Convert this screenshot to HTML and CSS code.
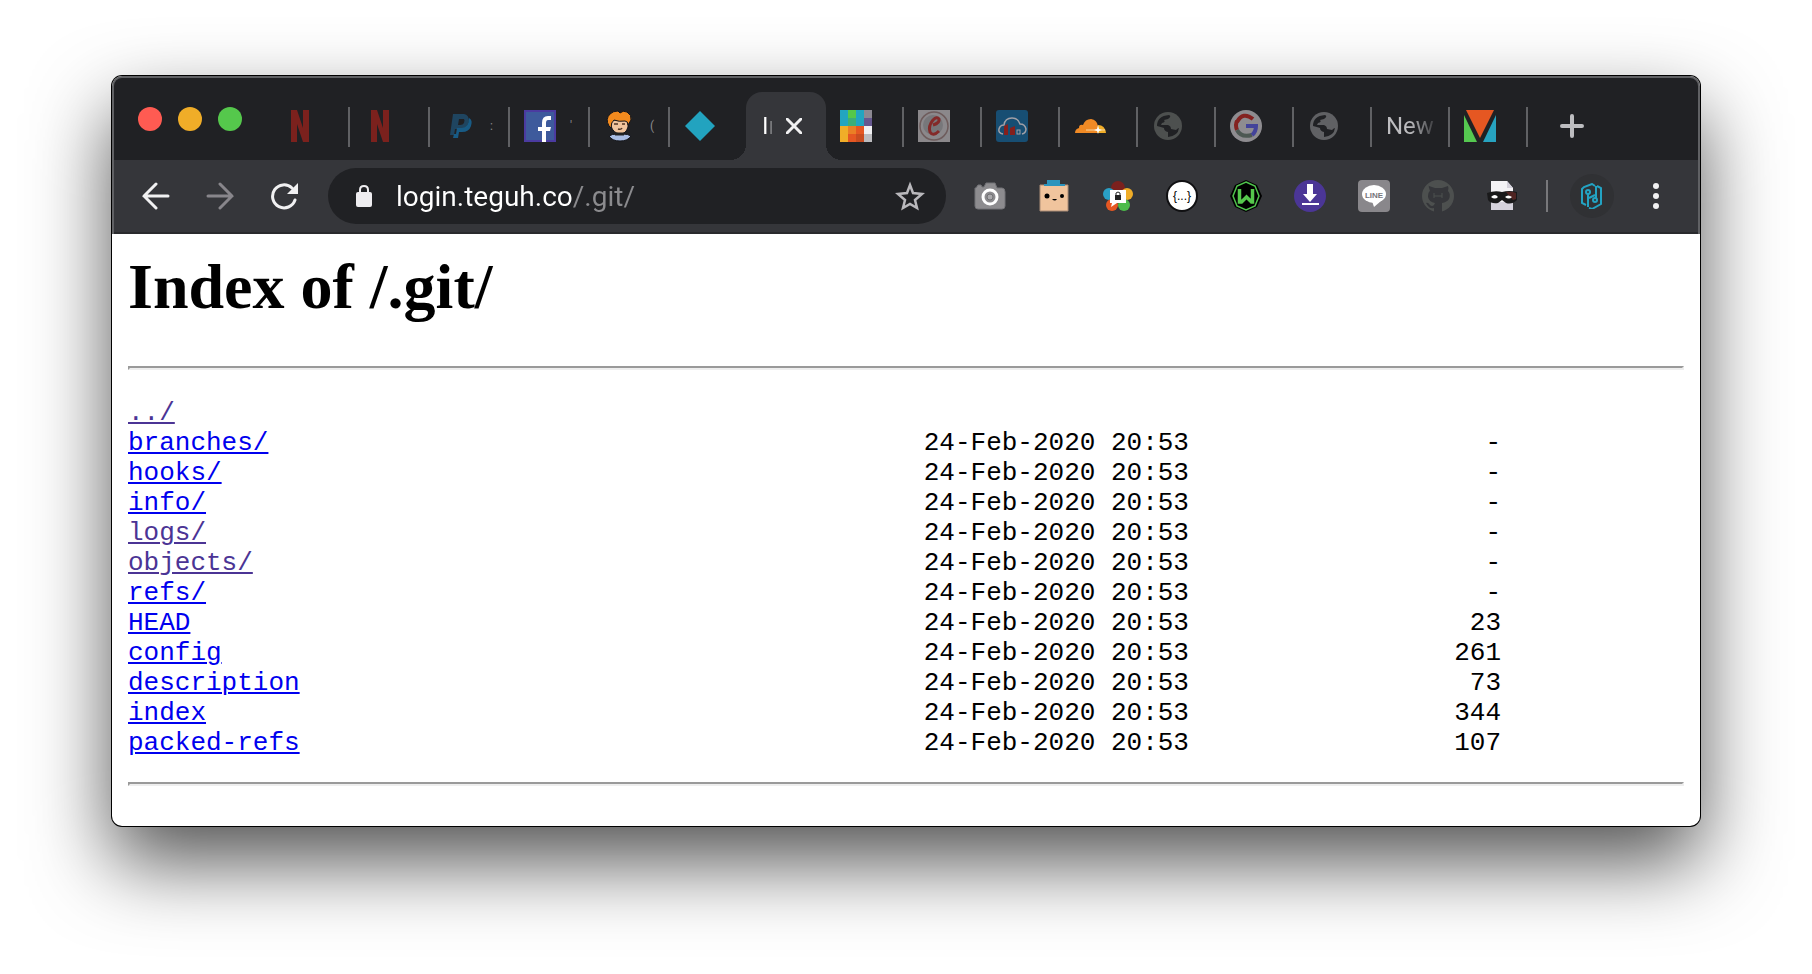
FILE: index.html
```html
<!DOCTYPE html>
<html lang="en">
<head>
  <meta charset="UTF-8">
  <meta name="viewport" content="width=device-width, initial-scale=1.0">
  <title>Index of /.git/</title>
  <link rel="stylesheet" href="styles.css">
</head>
<body>
  <div class="window">
    <header class="chrome">
      <div class="tab-strip">
        <div class="lights">
          <button class="light close" aria-label="Close"></button>
          <button class="light minimize" aria-label="Minimize"></button>
          <button class="light zoom" aria-label="Zoom"></button>
        </div>
        <nav class="tabs">
          <button class="tab" aria-label="Netflix">
            <svg width="32" height="32" viewBox="0 0 32 32" fill="#7b211d"><path d="M7 0h6l6 18V0h6v32h-6l-6-18v18H7z"/></svg>
          </button>
          <button class="tab" aria-label="Netflix">
            <svg width="32" height="32" viewBox="0 0 32 32" fill="#7b211d"><path d="M7 0h6l6 18V0h6v32h-6l-6-18v18H7z"/></svg>
          </button>
          <button class="tab" aria-label="PayPal">
            <svg width="32" height="32" viewBox="0 0 32 32"><path fill="#1f4560" d="M9 4h11q5 1 5 7-2 8-10 8h-4l-1 6H6z"/><path fill="#185b85" d="M25 8q4 2 2 8-2 6-9 6h-3l-1 6H9l1-4h2l1-6h5q7-1 7-10z"/><path fill="#202124" d="M15 9h5q1 1 0 4-1 2-4 2h-2z"/></svg>
            <span class="title">:</span>
          </button>
          <button class="tab" aria-label="Facebook">
            <svg width="32" height="32" viewBox="0 0 32 32"><path fill="#3e5a9c" stroke="#4b3ba0" stroke-width="2" d="M1 1h30v30H1z"/><path fill="#fff" d="M18 32V21h-4v-4h4v-4q0-7 6-7h3v4h-3q-2 0-2 3v4h5l-1 4h-4v11z"/></svg>
            <span class="title">'</span>
          </button>
          <button class="tab" aria-label="Profile">
            <svg width="32" height="32" viewBox="0 0 32 32"><path fill="#a9bde4" stroke="#14151a" d="M5 26q3-2 8-2h6q5 0 8 2-3 5-11 5T5 26z"/><path fill="#f0c49d" stroke="#14151a" d="M7 10h17v7q-2 7-8 7-7-1-9-8z"/><path fill="#f28a1e" stroke="#14151a" d="M5 16Q1 9 6 4q3-3 8-3l2 2q3-3 7-1 5 3 4 8l-3 5q0-4-3-4-6 1-11-1-3 2-3 8z"/><path stroke="#222" stroke-width="3" fill="none" d="M11 24h9"/><path stroke="#503423" stroke-width="1.500" fill="none" d="M10 14h4M18 14h3M14 19q3 1 4-1"/></svg>
            <span class="title">(</span>
          </button>
          <button class="tab before-active" aria-label="Diamond">
            <svg width="32" height="32" viewBox="0 0 32 32"><path fill="#22a3bf" d="M16 1l15 15-15 15L1 16z"/></svg>
          </button>
          <div class="tab active">
            <span class="title">In</span>
            <button class="tab-close" aria-label="Close tab">
              <svg width="16" height="16" viewBox="0 0 16 16" stroke="#f1f1f2" stroke-width="3" stroke-linecap="round"><path d="M1 1l14 14M15 1L1 15"/></svg>
            </button>
          </div>
          <button class="tab narrow" aria-label="Palette">
            <svg width="32" height="32" viewBox="0 0 32 32" shape-rendering="crispEdges"><path fill="#22a5c0" d="M0 0h8v16H0zM16 0h8v16h-8z"/><path fill="#55c84a" d="M8 0h8v8H8z"/><path fill="#3cae78" d="M8 8h8v8H8z"/><path fill="#8c8992" d="M24 0h8v8h-8z"/><path fill="#66588f" d="M24 8h8v8h-8z"/><path fill="#f0ad28" d="M0 16h8v16H0z"/><path fill="#ea7f25" d="M8 16h8v8H8z"/><path fill="#e55722" d="M8 24h8v8H8zM16 16h8v8h-8z"/><path fill="#c94c20" d="M16 24h8v8h-8z"/><path fill="#f0f0f2" d="M24 16h8v8h-8z"/><path fill="#bcbcbf" d="M24 24h8v8h-8z"/></svg>
          </button>
          <button class="tab narrow" aria-label="C">
            <svg width="32" height="32" viewBox="0 0 32 32"><path fill="#8b888b" d="M0 0h32v32H0z"/><circle cx="16" cy="16" r="14" fill="none" stroke="#6e5c5c" stroke-width="1.500"/><circle cx="15" cy="15" r="10" fill="#77777a"/><path fill="none" stroke="#842a29" stroke-width="3" d="M15 15q7-2 6-6-2-3-6 1-5 6-3 12 3 5 9-1"/></svg>
          </button>
          <button class="tab narrow" aria-label="Cloud">
            <svg width="32" height="32" viewBox="0 0 32 32"><rect width="32" height="32" rx="3" fill="#174e73"/><path fill="none" stroke="#a1a0a7" stroke-width="1.500" d="M7 24q-5-1-4-5 1-4 5-4 1-7 8-7 6 0 8 6 5 0 6 5 0 4-4 5"/><path fill="#84201d" d="M8 16l4-2v11H8zM14 18l5-2v9h-5z"/><rect x="21" y="20" width="3" height="4" fill="none" stroke="#a1a0a7"/></svg>
          </button>
          <button class="tab narrow" aria-label="Cloudflare">
            <svg width="32" height="32" viewBox="0 0 32 32"><path fill="#f08a25" d="M1 23q0-4 4-5 0-4 4-3 2-6 8-6 6 1 7 7l-1 7z"/><path fill="#f0ad28" d="M24 15q7 0 8 8h-9z"/><path stroke="#f6d7a6" d="M12 20h19"/><path fill="#fff" d="M24 15l1 4 3 1-3 1-1 3-1-3-3-1 3-1z"/></svg>
          </button>
          <button class="tab narrow" aria-label="Site">
            <svg width="32" height="32" viewBox="0 0 32 32"><circle cx="16" cy="16" r="14" fill="#4d504f"/><path fill="#202124" d="M5 16q0-10 12-11 3 1-1 4l-4 1q2 2-2 3l-1 2h7q3 1 3 4l5 1q2-2 3-2-1 8-11 9v-5q-4-1-4-4-3-1-7-2z"/></svg>
          </button>
          <button class="tab narrow" aria-label="Google">
            <svg width="32" height="32" viewBox="0 0 32 32" fill="none" stroke-width="4"><circle cx="16" cy="16" r="16" fill="#8e8c90"/><path stroke="#842220" d="M23 9Q13 1 7 12"/><path stroke="#842220" d="M7 11q-2 4 0 9"/><path stroke="#4d5853" d="M7 20q4 8 15 5"/><path stroke="#43439a" d="M16 16h10q0 6-4 9"/></svg>
          </button>
          <button class="tab narrow" aria-label="Site">
            <svg width="32" height="32" viewBox="0 0 32 32"><circle cx="16" cy="16" r="14" fill="#606164"/><path fill="#202124" d="M5 16q0-10 12-11 3 1-1 4l-4 1q2 2-2 3l-1 2h7q3 1 3 4l5 1q2-2 3-2-1 8-11 9v-5q-4-1-4-4-3-1-7-2z"/></svg>
          </button>
          <button class="tab narrow new-page">
            <span class="title">New</span>
          </button>
          <button class="tab narrow" aria-label="Triangles">
            <svg width="32" height="32" viewBox="0 0 32 32"><path fill="#e55722" d="M2 0h28L16 28z"/><path fill="#55c850" d="M0 5l13 27H0z"/><path fill="#27a3c0" d="M32 5v27H19z"/></svg>
          </button>
        </nav>
        <button class="new-tab" aria-label="New tab">
          <svg width="24" height="24" viewBox="0 0 24 24" stroke="#bdbdc0" stroke-width="4" stroke-linecap="round"><path d="M12 2v20M2 12h20"/></svg>
        </button>
      </div>

      <div class="toolbar">
        <button class="tool" aria-label="Back">
          <svg width="28" height="28" viewBox="0 0 28 28" fill="none" stroke="#f1f1f2" stroke-width="3" stroke-linecap="round"><path d="M14 2L2 14l12 12M2 14h24"/></svg>
        </button>
        <button class="tool" aria-label="Forward">
          <svg width="28" height="28" viewBox="0 0 28 28" fill="none" stroke="#88868b" stroke-width="3" stroke-linecap="round"><path d="M14 2l12 12-12 12M2 14h24"/></svg>
        </button>
        <button class="tool" aria-label="Reload">
          <svg width="28" height="28" viewBox="0 0 28 28"><path fill="none" stroke="#f1f1f2" stroke-width="3" stroke-linecap="round" d="M25 18A11.500 11.500 0 1 1 22 6"/><path fill="#f1f1f2" d="M28 1v11H17z"/></svg>
        </button>
        <div class="omnibox">
          <svg width="16" height="22" viewBox="0 0 16 22"><rect y="7" width="16" height="15" rx="2" fill="#eeedf0"/><path fill="none" stroke="#eeedf0" stroke-width="2" d="M4 8V5q0-4 4-4t4 4v3"/></svg>
          <input class="address" type="text" aria-label="Address" value="login.teguh.co/.git/">
          <button class="star" aria-label="Bookmark this page">
            <svg width="32" height="32" viewBox="0 0 32 32" fill="none" stroke="#b9b8bc" stroke-width="2.500"><path d="M16 5l3 8 9 1-7 6 2 8-7-4-7 4 2-8-7-6 9-1z"/></svg>
          </button>
        </div>
        <button class="tool" aria-label="Camera">
          <svg width="32" height="32" viewBox="0 0 32 32"><path fill="#8d8c8f" stroke="#737377" d="M2 8l2-3h3l1 2h2l2-4h9l2 5h5q3 0 3 4v14q0 3-3 3H4q-3 0-3-3V8z"/><circle cx="16" cy="17" r="7" fill="#8d8c8f" stroke="#fff" stroke-width="3"/><circle cx="16" cy="17" r="3" fill="#aaa9ac" stroke="#707073"/></svg>
        </button>
        <button class="tool" aria-label="Box">
          <svg width="32" height="32" viewBox="0 0 32 32"><path fill="#f0c49d" stroke="#aa8c76" d="M2 5h28v26H2z"/><path fill="#2b94bd" d="M6 6V4h3V0h13v4h5v2z"/><circle cx="9" cy="16" r="2.500"/><circle cx="24" cy="16" r="2"/><path d="M14 19h5q-2 3-5 0z"/></svg>
        </button>
        <button class="tool" aria-label="Password">
          <svg width="32" height="32" viewBox="0 0 32 32"><circle cx="16" cy="8" r="7" fill="#7b211d"/><circle cx="7" cy="14" r="6" fill="#2aa0c5"/><circle cx="25" cy="14" r="6" fill="#f0ad28"/><circle cx="10" cy="25" r="6" fill="#e55722"/><circle cx="22" cy="25" r="6" fill="#4cbb4a"/><path fill="#fff" d="M8 10h16v13h-9l-6 4 1-4H8z"/><path fill="#222" d="M13 15h6v5h-6z"/><path fill="none" stroke="#222" d="M14 15v-2q2-2 4 0v2"/></svg>
        </button>
        <button class="tool" aria-label="JSON">
          <svg width="32" height="32" viewBox="0 0 32 32"><circle cx="16" cy="16" r="15" fill="#fff" stroke="#101012" stroke-width="2"/><text x="16" y="20" text-anchor="middle" class="json-mark">{...}</text></svg>
        </button>
        <button class="tool" aria-label="W">
          <svg width="32" height="32" viewBox="0 0 32 32" fill="none"><path fill="#000" d="M16 0l11 5 5 11-5 11-11 5-11-5L0 16 5 5z"/><path stroke="#4fc24c" stroke-width="1.500" d="M16 2l9 4 4 10-4 10-9 4-9-4-4-10L7 6z"/><path stroke="#55c84c" stroke-width="3.500" d="M9.500 9v13h2l5-5 5 5h1V9"/></svg>
        </button>
        <button class="tool" aria-label="Download">
          <svg width="32" height="32" viewBox="0 0 32 32"><circle cx="16" cy="16" r="16" fill="#4b3696"/><path fill="#fff" d="M13 4h6v10h4l-7 8-7-8h4zM8 23h17v2H8z"/></svg>
        </button>
        <button class="tool" aria-label="LINE">
          <svg width="32" height="32" viewBox="0 0 32 32"><rect width="32" height="32" rx="4" fill="#89878b"/><ellipse cx="16" cy="14" rx="12" ry="9" fill="#fff"/><path fill="#fff" d="M14 21h9l-7 6z"/><text x="16" y="18" text-anchor="middle" class="line-mark">LINE</text></svg>
        </button>
        <button class="tool" aria-label="GitHub">
          <svg width="32" height="32" viewBox="0 0 32 32"><circle cx="16" cy="16" r="16" fill="#4d504f"/><path fill="#35363a" d="M7 6l6 2h7l6-2q1 2 0 5 3 3 1 8-2 3-7 4v9h-8v-4q-4 1-6-2l-2-3q2-1 4 2 2 2 4 0l1-2q-6-1-7-6 0-5 2-6-2-4-1-7z"/><path fill="none" stroke="#4d504f" d="M12 13v5m0-2h8m0-3v5"/></svg>
        </button>
        <button class="tool" aria-label="Mask">
          <svg width="32" height="32" viewBox="0 0 32 32"><path fill="#f4f3f6" d="M5 1h16l6 7v22H5z"/><path fill="#d5d2dc" d="M5 22h22v8H5zM21 1v7h6z"/><path fill="#19191a" d="M1 13q8-3 15-1 7-2 15 0v8q-5 5-11 3l-4-3-4 3Q5 24 2 20z"/><path fill="#4f2422" d="M20 12q6-1 10 1v6l-3 1z"/><path fill="#fff" d="M5 17q4-4 7 0-3 3-7 0zM19 17q3-3 7 0-3 3-7 0z"/></svg>
        </button>
        <span class="divider"></span>
        <button class="avatar" aria-label="Profile">
          <svg width="24" height="26" viewBox="0 0 24 26" fill="none" stroke="#23a3c3" stroke-width="2"><path d="M15 3l-3-2-8 3-2 2v14l4 2M9 25l3 1 9-5V5l-4-2"/><circle cx="8" cy="9" r="2"/><circle cx="15" cy="17" r="2"/><path d="M8 11v13M16 3v12M9 15l6-3"/></svg>
        </button>
        <button class="tool" aria-label="Menu">
          <svg width="8" height="28" viewBox="0 0 8 28" fill="#f1f1f2"><circle cx="4" cy="4" r="3"/><circle cx="4" cy="14" r="3"/><circle cx="4" cy="24" r="3"/></svg>
        </button>
      </div>
    </header>

    <main class="page">
      <h1>Index of /.git/</h1>
      <hr>
      <table class="listing">
        <colgroup><col class="name"><col class="date"><col class="size"></colgroup>
        <tr><td><a class="visited" href="../">../</a></td><td></td><td></td></tr>
        <tr><td><a href="branches/">branches/</a></td><td>24-Feb-2020 20:53</td><td>-</td></tr>
        <tr><td><a href="hooks/">hooks/</a></td><td>24-Feb-2020 20:53</td><td>-</td></tr>
        <tr><td><a href="info/">info/</a></td><td>24-Feb-2020 20:53</td><td>-</td></tr>
        <tr><td><a class="visited" href="logs/">logs/</a></td><td>24-Feb-2020 20:53</td><td>-</td></tr>
        <tr><td><a class="visited" href="objects/">objects/</a></td><td>24-Feb-2020 20:53</td><td>-</td></tr>
        <tr><td><a href="refs/">refs/</a></td><td>24-Feb-2020 20:53</td><td>-</td></tr>
        <tr><td><a href="HEAD">HEAD</a></td><td>24-Feb-2020 20:53</td><td>23</td></tr>
        <tr><td><a href="config">config</a></td><td>24-Feb-2020 20:53</td><td>261</td></tr>
        <tr><td><a href="description">description</a></td><td>24-Feb-2020 20:53</td><td>73</td></tr>
        <tr><td><a href="index">index</a></td><td>24-Feb-2020 20:53</td><td>344</td></tr>
        <tr><td><a href="packed-refs">packed-refs</a></td><td>24-Feb-2020 20:53</td><td>107</td></tr>
      </table>
      <hr>
    </main>
  </div>
</body>
</html>
```
FILE: styles.css
```css
:root {
  --strip: #202124;
  --bar: #35363a;
  --edge: #606164;
}
* { box-sizing: border-box; }
body {
  margin: 0;
  padding: 76px 112px 148px;
  background: white;
}
button {
  border: none;
  padding: 0;
  background: none;
  font: inherit;
  color: inherit;
}
svg { display: block; flex: none; }

.window {
  border-radius: 10px;
  background: white;
  box-shadow: 0 0 0 1px black, 0 36px 80px rgba(0, 0, 0, .68);
}

/* browser chrome */
.chrome {
  border: 2px solid var(--edge);
  border-bottom: none;
  border-radius: 10px 10px 0 0;
  background: var(--strip);
  font-family: Roboto, "Liberation Sans", sans-serif;
}
.tab-strip {
  display: flex;
  height: 82px;
  padding-left: 24px;
}
.lights {
  display: flex;
  gap: 16px;
  margin: 29px 28px 0 0;
}
.light {
  width: 24px;
  height: 24px;
  border-radius: 50%;
}
.close { background: #ff5b52; }
.minimize { background: #f0ad28; }
.zoom { background: #55c84c; }

.tabs {
  display: flex;
  align-items: flex-end;
  min-width: 0;
}
.tab {
  position: relative;
  display: flex;
  align-items: center;
  gap: 14px;
  width: 80px;
  height: 68px;
  padding-left: 14px;
  font-size: 24px;
}
.tab::after {
  content: "";
  position: absolute;
  right: 0;
  top: 15px;
  width: 2px;
  height: 40px;
  background: var(--edge);
}
.narrow { width: 78px; }
.before-active { width: 76px; }
.before-active::after { display: none; }
.title {
  font-size: 12px;
  color: #8b8b8e;
}
.active .title,
.new-page .title {
  font-size: 24px;
  color: transparent;
  -webkit-background-clip: text;
  background-clip: text;
}
.active .title { background-image: linear-gradient(90deg, white 7px, #77787b 7px, #77787b 10px, transparent 10px); }
.new-page .title { background-image: linear-gradient(90deg, #bdbdc0 50%, #3c3d40); }
.active {
  padding-left: 16px;
  gap: 4px;
  border-radius: 16px 16px 0 0;
  background: var(--bar);
}
.active::before,
.active::after {
  content: "";
  position: absolute;
  top: auto;
  bottom: 0;
  width: 16px;
  height: 16px;
}
.active::before {
  left: -16px;
  background: radial-gradient(circle at 0 0, transparent 16px, var(--bar) 16px);
}
.active::after {
  right: -16px;
  background: radial-gradient(circle at 100% 0, transparent 16px, var(--bar) 16px);
}
.new-tab {
  height: 68px;
  margin: 14px 0 0 32px;
}

.toolbar {
  display: flex;
  align-items: center;
  height: 74px;
  padding: 0 10px;
  background: var(--bar);
  border-bottom: 2px solid #292a2d;
}
.tool {
  display: flex;
  align-items: center;
  justify-content: center;
  width: 64px;
  height: 56px;
}
.omnibox {
  display: flex;
  flex: 1;
  align-items: center;
  min-width: 0;
  height: 56px;
  margin: 0 12px;
  padding: 0 20px 0 28px;
  border-radius: 28px;
  background: var(--strip);
}
.address {
  flex: 1;
  min-width: 0;
  margin-left: 24px;
  padding: 0;
  border: none;
  outline: none;
  font-family: inherit;
  font-size: 28px;
  color: transparent;
  /* host in white, path in grey */
  background: linear-gradient(90deg, white 177px, #8b8b8e 177px);
  -webkit-background-clip: text;
  background-clip: text;
}
.json-mark {
  font: 12px "Liberation Sans", sans-serif;
}
.line-mark {
  font: bold 8px "Liberation Sans", sans-serif;
  fill: #77757a;
}
.divider {
  width: 2px;
  height: 32px;
  margin: 0 22px 0 12px;
  background: #78787b;
}
.avatar {
  display: flex;
  align-items: center;
  justify-content: center;
  width: 44px;
  height: 44px;
  margin-right: 10px;
  border-radius: 50%;
  background: #303134;
}

/* directory listing */
.page { padding: 16px 16px 40px; }
h1 {
  margin: 0 0 42px;
  font: bold 64px/74px "Liberation Serif", serif;
}
hr {
  margin: 0;
  border: 2px solid;
  border-color: #9a9a9a #eee #eee #9a9a9a;
}
.listing {
  margin: 28px 0 24px;
  border-collapse: collapse;
  table-layout: fixed;
  width: 88ch;
  font: 26px/30px "Liberation Mono", monospace;
}
.name { width: 51ch; }
.date { width: 17ch; }
.size { width: 20ch; }
td {
  height: 30px;
  padding: 0;
  white-space: nowrap;
}
td:last-child { text-align: right; }
.listing a {
  color: #0000ee;
  text-decoration-thickness: 2px;
  text-underline-offset: 2px;
}
.listing .visited { color: #4b3495; }
```
